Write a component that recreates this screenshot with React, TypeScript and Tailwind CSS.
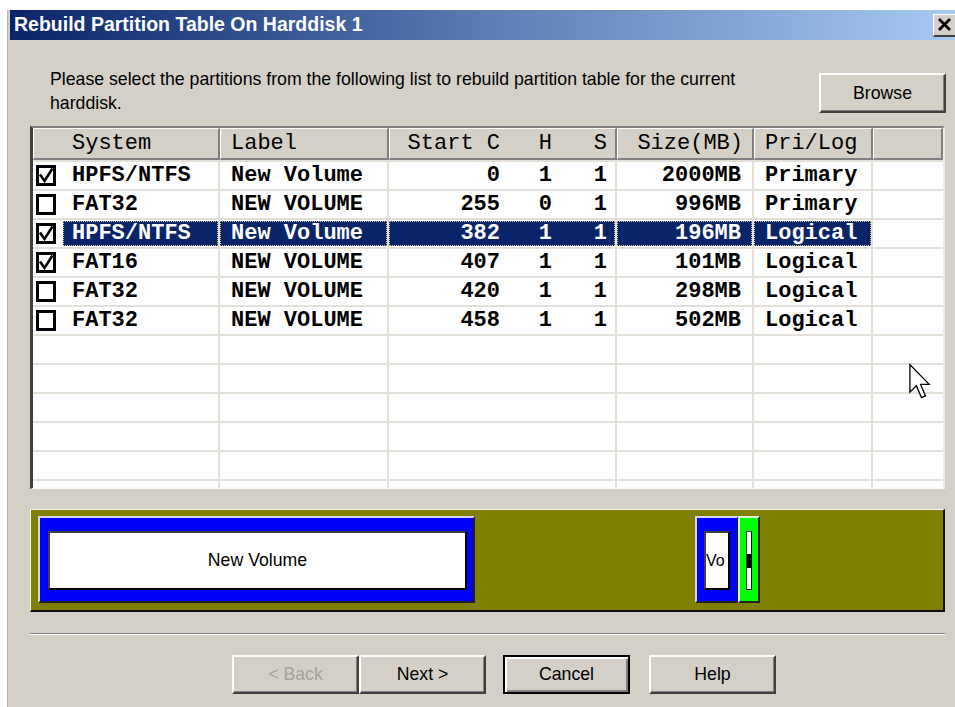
import React from 'react';

type Partition = {
  sys: string;
  label: string;
  c: number;
  h: number;
  s: number;
  size: string;
  kind: string;
  checked: boolean;
};

const PARTITIONS: Partition[] = [
  { sys: 'HPFS/NTFS', label: 'New Volume', c: 0, h: 1, s: 1, size: '2000MB', kind: 'Primary', checked: true },
  { sys: 'FAT32', label: 'NEW VOLUME', c: 255, h: 0, s: 1, size: '996MB', kind: 'Primary', checked: false },
  { sys: 'HPFS/NTFS', label: 'New Volume', c: 382, h: 1, s: 1, size: '196MB', kind: 'Logical', checked: true },
  { sys: 'FAT16', label: 'NEW VOLUME', c: 407, h: 1, s: 1, size: '101MB', kind: 'Logical', checked: true },
  { sys: 'FAT32', label: 'NEW VOLUME', c: 420, h: 1, s: 1, size: '298MB', kind: 'Logical', checked: false },
  { sys: 'FAT32', label: 'NEW VOLUME', c: 458, h: 1, s: 1, size: '502MB', kind: 'Logical', checked: false },
];

const SELECTED = 2;
const EMPTY_ROWS = 6;

function CheckBox({ on }: { on: boolean }) {
  return (
    <svg width="20" height="21" viewBox="0 0 20 21" className="shrink-0">
      <rect x="1.5" y="1.5" width="17" height="18" fill="#fff" stroke="#000" strokeWidth="3" />
      {on && <path d="M4 9.5 L8.5 16 L16.5 3.5" fill="none" stroke="#000" strokeWidth="2.6" />}
    </svg>
  );
}

// classic raised push button
function Button({ label, disabled, isDefault }: { label: string; disabled?: boolean; isDefault?: boolean }) {
  const frame = isDefault
    ? 'border-2 border-black shadow-[inset_2px_2px_0_#fff,inset_-2px_-2px_0_#808080]'
    : 'border-t-2 border-l-2 border-t-white border-l-white border-r-2 border-b-2 border-r-[#404040] border-b-[#404040] shadow-[inset_-1px_-1px_0_#808080]';
  return (
    <div
      className={`h-[39px] w-[127px] bg-[#d4d0c8] flex items-center justify-center text-[17.7px] ${frame} ${
        disabled ? 'text-[#a3a19c]' : 'text-black'
      }`}
    >
      {label}
    </div>
  );
}

function HeaderCell({ className, children }: { className: string; children?: React.ReactNode }) {
  return (
    <div
      className={`h-full flex items-center border-t border-l border-t-white border-l-white border-r-2 border-b-2 border-r-[#808080] border-b-[#808080] ${className}`}
    >
      {children}
    </div>
  );
}

function PartitionRow({ p, selected }: { p?: Partition; selected: boolean }) {
  const grid = 'h-full border-r-2 border-[#e3e0d9] flex items-center';
  const hl = selected
    ? 'bg-[#0a246a] text-white border border-dotted border-[#cfc68a]'
    : 'text-black border border-transparent';
  return (
    <div className="h-[29px] flex border-t-2 border-[#e3e0d9] font-bold">
      <div className={`w-[187px] ${grid}`}>
        {p && (
          <>
            <div className="ml-[3px]">
              <CheckBox on={p.checked} />
            </div>
            <div className={`ml-[7px] h-[25px] flex-1 flex items-center pl-[8px] ${hl}`}>{p.sys}</div>
          </>
        )}
      </div>
      <div className={`w-[169px] ${grid}`}>
        {p && <div className={`h-[25px] w-full flex items-center pl-[10px] ${hl}`}>{p.label}</div>}
      </div>
      <div className={`w-[228px] ${grid}`}>
        {p && (
          <div className={`h-[25px] w-full flex items-center ${hl}`}>
            <span className="w-[110px] text-right">{p.c}</span>
            <span className="w-[52px] text-right">{p.h}</span>
            <span className="w-[55px] text-right">{p.s}</span>
          </div>
        )}
      </div>
      <div className={`w-[137px] ${grid}`}>
        {p && <div className={`h-[25px] w-full flex items-center justify-end pr-[10px] ${hl}`}>{p.size}</div>}
      </div>
      <div className={`w-[119px] ${grid}`}>
        {p && <div className={`h-[25px] w-full flex items-center pl-[10px] ${hl}`}>{p.kind}</div>}
      </div>
      <div className="flex-1" />
    </div>
  );
}

export default function App() {
  return (
    <div className="relative w-[955px] h-[707px] bg-white pt-[10px] pl-[7px] overflow-hidden font-['Liberation_Sans',Arial,sans-serif]">
      <div className="h-full bg-[#d4d0c8] border-l border-[#b9b5ad] flex flex-col">
        {/* title bar */}
        <div className="ml-[2px] h-[30px] flex items-center justify-between bg-linear-to-r from-[#0a246a] via-[#5a7db4] to-[#a6caf0]">
          <span className="pl-[4px] text-white font-bold text-[19.5px] leading-none">
            Rebuild Partition Table On Harddisk 1
          </span>
          <div className="-mr-[4px] w-[26px] h-[23px] bg-[#d4d0c8] border-t border-l border-white border-r-2 border-b-2 border-r-[#404040] border-b-[#404040] flex items-center pl-[3px]">
            <svg width="15" height="13" viewBox="0 0 15 13">
              <path d="M2 1 L13 12 M13 1 L2 12" stroke="#000" strokeWidth="2.8" />
            </svg>
          </div>
        </div>

        <div className="flex-1 pl-[22px] pr-[10px] flex flex-col">
          {/* intro + browse */}
          <div className="mt-[26px] flex justify-between items-start">
            <div className="ml-[20px] pt-[1px] text-[17.7px] leading-[24px] text-black">
              <div>Please select the partitions from the following list to rebuild partition table for the current</div>
              <div>harddisk.</div>
            </div>
            <div className="mt-[7px] -mr-[1px]">
              <div className="h-[40px] w-[127px] bg-[#d4d0c8] flex items-center justify-center text-[17.7px] border-t-2 border-l-2 border-t-white border-l-white border-r-2 border-b-2 border-r-[#404040] border-b-[#404040] shadow-[inset_-1px_-1px_0_#808080]">
                Browse
              </div>
            </div>
          </div>

          {/* partition list */}
          <div className="mt-[11px] h-[363px] bg-white overflow-hidden border-t-2 border-l-[3px] border-t-[#808080] border-l-[#404040] border-r-2 border-b border-r-[#ecebe8] border-b-white font-['Liberation_Mono',monospace] text-[22px] leading-none">
            <div className="h-[32px] flex bg-[#d4d0c8] text-black">
              <HeaderCell className="w-[187px] pl-[38px]">System</HeaderCell>
              <HeaderCell className="w-[169px] pl-[10px]">Label</HeaderCell>
              <HeaderCell className="w-[228px]">
                <span className="w-[110px] text-right">Start C</span>
                <span className="w-[52px] text-right">H</span>
                <span className="w-[55px] text-right">S</span>
              </HeaderCell>
              <HeaderCell className="w-[137px] justify-end pr-[9px]">Size(MB)</HeaderCell>
              <HeaderCell className="w-[119px] pl-[10px]">Pri/Log</HeaderCell>
              <HeaderCell className="flex-1" />
            </div>
            {PARTITIONS.map((p, i) => (
              <PartitionRow key={i} p={p} selected={i === SELECTED} />
            ))}
            {Array.from({ length: EMPTY_ROWS }).map((_, i) => (
              <PartitionRow key={`e${i}`} selected={false} />
            ))}
          </div>

          {/* disk map */}
          <div className="mt-[20px] h-[103px] bg-[#808000] border-t border-l border-t-[#f4f4f4] border-l-[#f4f4f4] border-r-2 border-b-2 border-r-[#101010] border-b-[#101010] flex items-start pl-[7px] pt-[6px]">
            <div className="w-[437px] h-[87px] bg-[#0000ff] border-t-2 border-l-2 border-t-[#d8d8e8] border-l-[#d8d8e8] border-r-2 border-b-2 border-r-[#202020] border-b-[#202020]">
              <div className="ml-[8px] mt-[13px] w-[419px] h-[59px] bg-white border-2 border-t-[#404040] border-l-[#404040] border-r-black border-b-black flex items-center justify-center text-[17.7px] text-black">
                New Volume
              </div>
            </div>
            <div className="ml-[220px] w-[43px] h-[87px] bg-[#0000ff] border-t-2 border-l-2 border-t-[#d8d8e8] border-l-[#d8d8e8] border-r border-b-2 border-r-[#202020] border-b-[#202020]">
              <div className="ml-[7px] mt-[13px] w-[26px] h-[59px] bg-white border-2 border-t-[#404040] border-l-[#404040] border-r-black border-b-black flex items-center text-[16px] text-black whitespace-nowrap">
                Vo
              </div>
            </div>
            <div className="w-[22px] h-[87px] bg-[#00ff00] border-t-2 border-l-2 border-t-[#d8f8d8] border-l-[#d8f8d8] border-r-2 border-b-2 border-r-[#202020] border-b-[#202020]">
              <div className="ml-[6px] mt-[13px] w-[6px] h-[59px] bg-white border border-t-[#404040] border-l-[#404040] border-r-black border-b-black flex flex-col">
                <div className="h-[22px]" />
                <div className="h-[14px] bg-black" />
              </div>
            </div>
          </div>

          {/* etched separator */}
          <div className="mt-[21px] border-t border-b border-t-[#808080] border-b-white" />

          {/* wizard buttons */}
          <div className="mt-[20px] flex items-center pl-[202px]">
            <Button label="< Back" disabled />
            <Button label="Next >" />
            <div className="ml-[17px]">
              <Button label="Cancel" isDefault />
            </div>
            <div className="ml-[19px]">
              <Button label="Help" />
            </div>
          </div>
        </div>
      </div>

      {/* mouse pointer resting over the list */}
      <svg className="absolute left-[909px] top-[363px]" width="22" height="38" viewBox="0 0 12 20">
        <path
          d="M0.5 0.5 L0.5 15.5 L4 12 L6.8 18.5 L9 17.6 L6.3 11.3 L11 11.3 Z"
          fill="#fff"
          stroke="#000"
          strokeWidth="0.7"
          strokeLinejoin="miter"
        />
      </svg>
    </div>
  );
}
